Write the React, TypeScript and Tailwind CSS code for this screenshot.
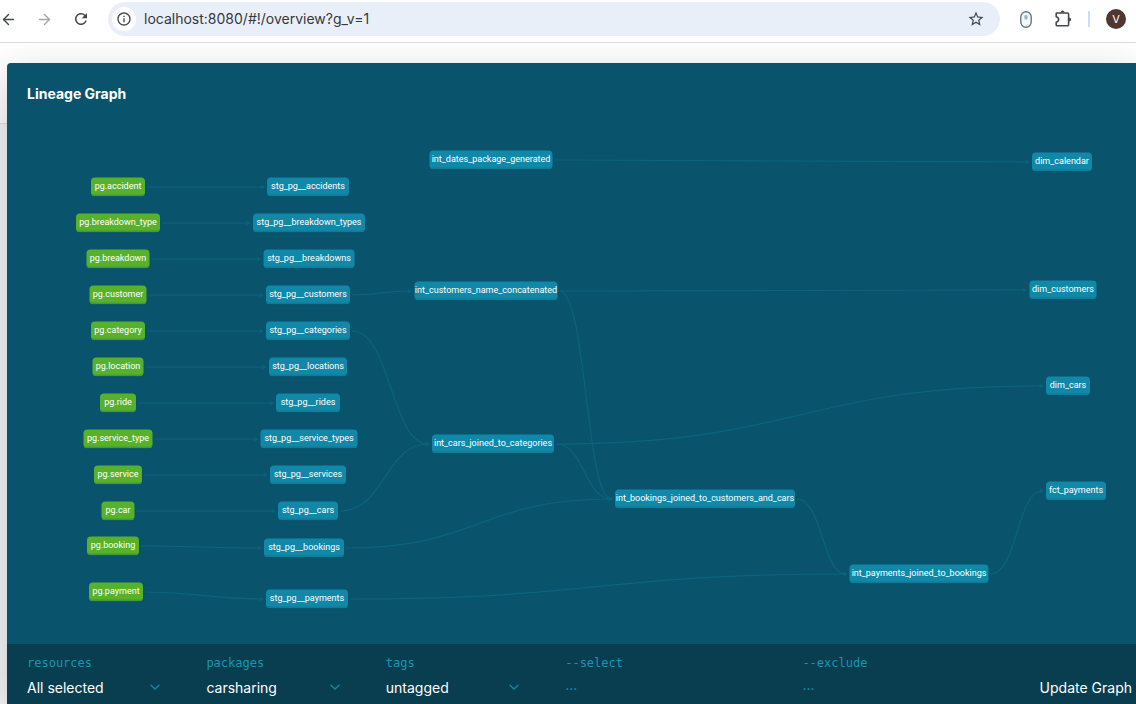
import { ArrowLeft, ArrowRight } from 'lucide-react';
import { MdInfoOutline, MdRefresh, MdStarBorder } from 'react-icons/md';

type GraphNode = { id: string; x: number; y: number; w: number; source?: boolean };

const NODES: GraphNode[] = [
  { id: 'pg.accident', x: 111, y: 123, w: 54, source: true },
  { id: 'pg.breakdown_type', x: 111, y: 159, w: 84, source: true },
  { id: 'pg.breakdown', x: 111, y: 195, w: 63, source: true },
  { id: 'pg.customer', x: 111, y: 231, w: 57, source: true },
  { id: 'pg.category', x: 111, y: 267, w: 54, source: true },
  { id: 'pg.location', x: 111, y: 303, w: 51, source: true },
  { id: 'pg.ride', x: 111, y: 339, w: 36, source: true },
  { id: 'pg.service_type', x: 111, y: 375, w: 69, source: true },
  { id: 'pg.service', x: 111, y: 411, w: 48, source: true },
  { id: 'pg.car', x: 111, y: 447, w: 33, source: true },
  { id: 'pg.booking', x: 106, y: 482, w: 52, source: true },
  { id: 'pg.payment', x: 109, y: 528, w: 54, source: true },
  { id: 'stg_pg__accidents', x: 301, y: 123, w: 82 },
  { id: 'stg_pg__breakdown_types', x: 302, y: 159, w: 112 },
  { id: 'stg_pg__breakdowns', x: 302, y: 195, w: 91 },
  { id: 'stg_pg__customers', x: 301, y: 231, w: 84 },
  { id: 'stg_pg__categories', x: 301, y: 267, w: 84 },
  { id: 'stg_pg__locations', x: 301, y: 303, w: 78 },
  { id: 'stg_pg__rides', x: 301, y: 339, w: 64 },
  { id: 'stg_pg__service_types', x: 302, y: 375, w: 97 },
  { id: 'stg_pg__services', x: 301, y: 411, w: 76 },
  { id: 'stg_pg__cars', x: 301, y: 447, w: 60 },
  { id: 'stg_pg__bookings', x: 297, y: 484, w: 80 },
  { id: 'stg_pg__payments', x: 300, y: 535, w: 82 },
  { id: 'int_dates_package_generated', x: 484, y: 96, w: 123 },
  { id: 'int_customers_name_concatenated', x: 479, y: 227, w: 143 },
  { id: 'int_cars_joined_to_categories', x: 486, y: 380, w: 122 },
  { id: 'int_bookings_joined_to_customers_and_cars', x: 698, y: 435, w: 180 },
  { id: 'int_payments_joined_to_bookings', x: 912, y: 510, w: 139 },
  { id: 'dim_calendar', x: 1055, y: 98, w: 60 },
  { id: 'dim_customers', x: 1056, y: 226, w: 67 },
  { id: 'dim_cars', x: 1061, y: 322, w: 44 },
  { id: 'fct_payments', x: 1069, y: 427, w: 60 },
];

const LINKS: [string, string][] = [
  ['pg.accident', 'stg_pg__accidents'],
  ['pg.breakdown_type', 'stg_pg__breakdown_types'],
  ['pg.breakdown', 'stg_pg__breakdowns'],
  ['pg.customer', 'stg_pg__customers'],
  ['pg.category', 'stg_pg__categories'],
  ['pg.location', 'stg_pg__locations'],
  ['pg.ride', 'stg_pg__rides'],
  ['pg.service_type', 'stg_pg__service_types'],
  ['pg.service', 'stg_pg__services'],
  ['pg.car', 'stg_pg__cars'],
  ['pg.booking', 'stg_pg__bookings'],
  ['pg.payment', 'stg_pg__payments'],
  ['stg_pg__customers', 'int_customers_name_concatenated'],
  ['stg_pg__categories', 'int_cars_joined_to_categories'],
  ['stg_pg__cars', 'int_cars_joined_to_categories'],
  ['stg_pg__bookings', 'int_bookings_joined_to_customers_and_cars'],
  ['stg_pg__payments', 'int_payments_joined_to_bookings'],
  ['int_customers_name_concatenated', 'int_bookings_joined_to_customers_and_cars'],
  ['int_customers_name_concatenated', 'dim_customers'],
  ['int_cars_joined_to_categories', 'int_bookings_joined_to_customers_and_cars'],
  ['int_cars_joined_to_categories', 'dim_cars'],
  ['int_bookings_joined_to_customers_and_cars', 'int_payments_joined_to_bookings'],
  ['int_payments_joined_to_bookings', 'fct_payments'],
  ['int_dates_package_generated', 'dim_calendar'],
];

const byId = new Map(NODES.map((n) => [n.id, n]));

function linkEnds([from, to]: [string, string]) {
  const a = byId.get(from)!;
  const b = byId.get(to)!;
  return { x1: a.x + a.w / 2 + 2, y1: a.y + 1, x2: b.x - b.w / 2 - 2, y2: b.y + 1 };
}

function Edge({ link }: { link: [string, string] }) {
  const { x1, y1, x2, y2 } = linkEnds(link);
  const mid = (x1 + x2) / 2;
  return (
    <g>
      <path d={`M${x1} ${y1}C${mid} ${y1} ${mid} ${y2} ${x2 - 2} ${y2}`} fill="none" stroke="#0a647d" strokeWidth="1.2" />
      <path d={`M${x2} ${y2}l-5 -2.500l1.500 2.500l-1.500 2.500z`} fill="#0a647d" />
    </g>
  );
}

function NodeBox({ node }: { node: GraphNode }) {
  return (
    <div
      className={`absolute flex h-[19px] -translate-x-1/2 -translate-y-1/2 items-center justify-center rounded border-b-2 pb-px font-['Roboto',sans-serif] text-[9px] leading-none whitespace-nowrap text-white ${
        node.source ? 'border-[#429a34] bg-[#58b12b]' : 'border-[#0d7c99] bg-[#1188a8]'
      }`}
      style={{ left: node.x, top: node.y + 1, width: node.w }}
    >
      {node.id}
    </div>
  );
}

function Picker({ id, label, value }: { id: string; label: string; value: string }) {
  return (
    <div className="flex min-w-0 flex-col gap-0.5">
      <label htmlFor={id} className="font-['DejaVu_Sans_Mono',monospace] text-xs leading-5 text-[#1597b0]">{label}</label>
      <div className="relative mr-10">
        <select id={id} defaultValue={value} className="w-full appearance-none bg-transparent text-sm leading-5 text-white outline-none">
          <option>{value}</option>
        </select>
        <svg className="pointer-events-none absolute top-1/2 right-[5px] h-2 w-3 -translate-y-1/2" viewBox="0 0 12 8" fill="none" stroke="#1188a8" strokeWidth="1.3">
          <path d="M1.500 1.800L6 6l4.500-4.200" />
        </svg>
      </div>
    </div>
  );
}

function Query({ id, label }: { id: string; label: string }) {
  return (
    <div className="flex min-w-0 flex-col gap-0.5">
      <label htmlFor={id} className="font-['DejaVu_Sans_Mono',monospace] text-xs leading-5 text-[#1597b0]">{label}</label>
      <input id={id} placeholder="..." className="mr-10 bg-transparent text-sm leading-5 text-white outline-none placeholder:text-[#1597b0]" />
    </div>
  );
}

function BrowserBar() {
  return (
    <header className="relative z-10 flex h-[43px] shrink-0 items-center border-b border-[#dcdcdc] bg-white pr-2.5 pb-1 text-[#45474a]">
      <button aria-label="Back" className="w-5"><ArrowLeft size={17} strokeWidth={2} /></button>
      <button aria-label="Forward" className="ml-4 w-5 text-[#a5a6a8]"><ArrowRight size={17} strokeWidth={2} /></button>
      <button aria-label="Reload" className="ml-4 w-5"><MdRefresh size={18} /></button>
      <div className="ml-4 flex h-[34px] min-w-0 flex-1 items-center rounded-full bg-[#e9eff9] px-1">
        <button aria-label="Site information" className="flex size-6 shrink-0 items-center justify-center rounded-full bg-white"><MdInfoOutline size={16} /></button>
        <input aria-label="Address" defaultValue="localhost:8080/#!/overview?g_v=1" className="ml-2 min-w-0 flex-1 bg-transparent text-sm text-[#36383b] outline-none" />
        <button aria-label="Bookmark" className="mr-[11px]"><MdStarBorder size={18} /></button>
      </div>
      <button aria-label="Mouse extension" className="ml-5">
        <svg width="12" height="17" viewBox="0 0 12 17" fill="none">
          <rect x="0.800" y="0.800" width="10.400" height="15.400" rx="5.200" fill="#f4f8fa" stroke="#647985" strokeWidth="1.400" />
          <rect x="4.300" y="3.800" width="3.400" height="5" rx="1.700" fill="#a3b5bf" />
        </svg>
      </button>
      <button aria-label="Extensions" className="ml-5">
        <svg width="20" height="20" viewBox="0 0 20 20" fill="none">
          <path d="M4.700 4H15.500Q16.600 4 16.600 5.100V15.700Q16.600 16.800 15.500 16.800H5.300Q4.200 16.800 4.200 15.700V13.200C7.400 12.400 7.400 8.700 4.200 7.800V4.500Q4.200 4 4.700 4Z" stroke="#45474a" strokeWidth="1.600" strokeLinejoin="round" />
          <path d="M8.500 3.500a2 2 0 0 1 4 0zM17 8.500a2 2 0 0 1 0 4z" fill="#45474a" />
        </svg>
      </button>
      <div className="ml-4 h-4 w-0.5 bg-[#c9defa]" />
      <button aria-label="Profile" className="ml-4 flex size-5 items-center justify-center rounded-full bg-[#513630] text-[11px] text-white">V</button>
    </header>
  );
}

export default function App() {
  return (
    <div className="flex min-h-screen flex-col overflow-hidden bg-white font-['Inter',sans-serif]">
      <BrowserBar />
      <main className="flex flex-1">
        <div className="flex w-[7px] shrink-0 flex-col" aria-hidden="true">
          <div className="h-[81px] border-b border-[#dfe3e6]" />
          <div className="flex-1 bg-[#f5f7f9]" />
        </div>
        <section className="relative mt-5 flex min-w-0 flex-1 flex-col rounded-tl bg-[#09546c] shadow-[0_14px_44px_rgba(0,0,0,0.22)]">
          <div className="relative min-h-[580px] flex-1 overflow-hidden">
            <h1 className="px-5 pt-5 text-sm leading-[22px] font-bold text-white">Lineage Graph</h1>
            <svg className="absolute inset-0 size-full" aria-hidden="true">
              {LINKS.map((l) => <Edge key={l.join()} link={l} />)}
            </svg>
            {NODES.map((n) => <NodeBox key={n.id} node={n} />)}
          </div>
          <footer className="grid h-[60px] grid-cols-[180fr_180fr_180fr_238fr_238fr_auto] bg-[#083e50] pt-[9px] pr-1 pl-5">
            <Picker id="resources" label="resources" value="All selected" />
            <Picker id="packages" label="packages" value="carsharing" />
            <Picker id="tags" label="tags" value="untagged" />
            <Query id="select" label="--select" />
            <Query id="exclude" label="--exclude" />
            <button className="self-end pb-1.5 text-sm leading-5 text-white">Update Graph</button>
          </footer>
        </section>
      </main>
    </div>
  );
}
